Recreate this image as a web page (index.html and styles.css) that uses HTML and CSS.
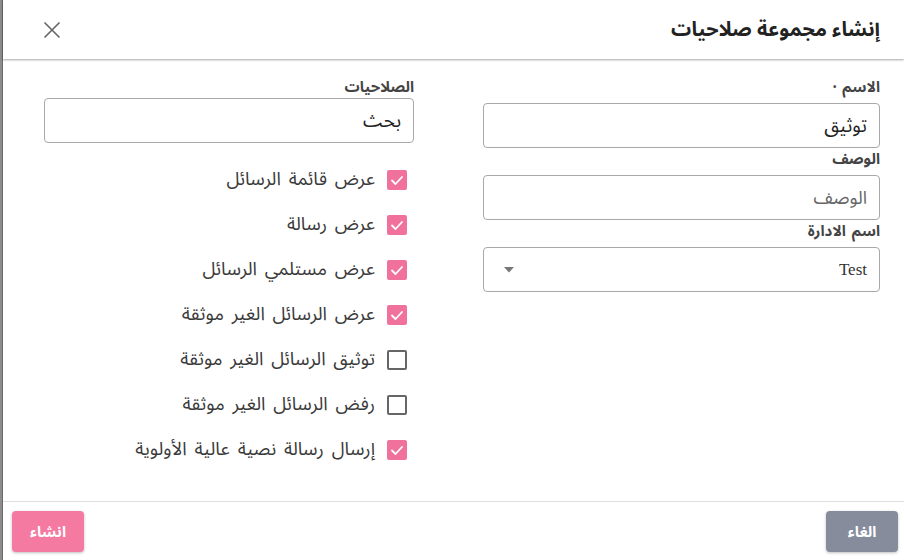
FILE: index.html
```html
<!DOCTYPE html>
<html lang="ar">
<head>
<meta charset="utf-8">
<title>إنشاء مجموعة صلاحيات</title>
<link rel="stylesheet" href="styles.css">
</head>
<body>
<div class="backdrop"></div>
<div class="dialog" dir="rtl">
  <header class="dlg-head">
    <h1 class="dlg-title">إنشاء مجموعة صلاحيات</h1>
    <button class="close" aria-label="close">
      <svg width="18" height="18" viewBox="0 0 18 18"><path d="M1.5 1.5 L16.5 16.5 M16.5 1.5 L1.5 16.5" stroke="#666" stroke-width="1.6" fill="none"/></svg>
    </button>
  </header>
  <main class="dlg-body">
    <section class="col col-main">
      <label class="lbl">الاسم <span class="req">•</span></label>
      <div class="field"><span class="val">توثيق</span></div>
      <label class="lbl">الوصف</label>
      <div class="field"><span class="ph">الوصف</span></div>
      <label class="lbl">اسم الادارة</label>
      <div class="field select">
        <span class="latin" dir="ltr">Test</span>
        <svg class="caret" width="10" height="6" viewBox="0 0 10 6"><path d="M0 0 L10 0 L5 5.5 Z" fill="#777"/></svg>
      </div>
    </section>
    <section class="col col-perms">
      <label class="lbl lbl-tight">الصلاحيات</label>
      <div class="field"><span class="val">بحث</span></div>
      <ul class="checks">
        <li class="chk on"><span class="box"><svg viewBox="0 0 20 20"><path d="M5 10.5 L8.5 14 L15 7" stroke="#fff" stroke-width="1.8" fill="none" stroke-linecap="round" stroke-linejoin="round"/></svg></span>عرض قائمة الرسائل</li>
        <li class="chk on"><span class="box"><svg viewBox="0 0 20 20"><path d="M5 10.5 L8.5 14 L15 7" stroke="#fff" stroke-width="1.8" fill="none" stroke-linecap="round" stroke-linejoin="round"/></svg></span>عرض رسالة</li>
        <li class="chk on"><span class="box"><svg viewBox="0 0 20 20"><path d="M5 10.5 L8.5 14 L15 7" stroke="#fff" stroke-width="1.8" fill="none" stroke-linecap="round" stroke-linejoin="round"/></svg></span>عرض مستلمي الرسائل</li>
        <li class="chk on"><span class="box"><svg viewBox="0 0 20 20"><path d="M5 10.5 L8.5 14 L15 7" stroke="#fff" stroke-width="1.8" fill="none" stroke-linecap="round" stroke-linejoin="round"/></svg></span>عرض الرسائل الغير موثقة</li>
        <li class="chk"><span class="box"></span>توثيق الرسائل الغير موثقة</li>
        <li class="chk"><span class="box"></span>رفض الرسائل الغير موثقة</li>
        <li class="chk on"><span class="box"><svg viewBox="0 0 20 20"><path d="M5 10.5 L8.5 14 L15 7" stroke="#fff" stroke-width="1.8" fill="none" stroke-linecap="round" stroke-linejoin="round"/></svg></span>إرسال رسالة نصية عالية الأولوية</li>
      </ul>
    </section>
  </main>
  <footer class="dlg-foot">
    <button class="btn btn-cancel">الغاء</button>
    <button class="btn btn-create">انشاء</button>
  </footer>
</div>
</body>
</html>
```
FILE: styles.css
```css
* { box-sizing: border-box; }
html, body { margin: 0; padding: 0; }
body {
  width: 904px;
  height: 560px;
  overflow: hidden;
  display: flex;
  background: #8f8f8f;
  font-family: "Noto Sans Arabic", "Noto Sans", "DejaVu Sans", sans-serif;
  color: #333;
}
.backdrop {
  width: 3px;
  flex: none;
  background: #8c8c8c;
  border-right: 1px solid #6a6a6a;
}
.dialog {
  flex: 1;
  background: #fff;
  display: flex;
  flex-direction: column;
  height: 560px;
}
.dlg-head {
  height: 59px;
  flex: none;
  display: flex;
  align-items: center;
  justify-content: space-between;
  padding: 0 24px 0 40px;
  box-shadow: 0 1px 2px rgba(0,0,0,0.35);
  position: relative;
  z-index: 1;
}
.dlg-title {
  margin: 0;
  font-size: 20px;
  font-weight: 700;
  color: #222;
}
.close {
  background: none;
  border: 0;
  padding: 0;
  width: 18px;
  height: 18px;
  display: flex;
}
.dlg-body {
  flex: 1;
  display: grid;
  grid-template-columns: 397px 370px;
  column-gap: 69px;
  align-content: start;
  padding: 17px 24px 0 40px;
}
.col { display: flex; flex-direction: column; }
.lbl {
  height: 22px;
  margin-bottom: 5px;
  font-size: 15px;
  font-weight: 700;
  color: #444;
  line-height: 22px;
  word-spacing: 2px;
}
.lbl-tight { margin-bottom: 0; }
.req { font-size: 9px; vertical-align: middle; }
.field {
  height: 45px;
  border: 1px solid #a8a8a8;
  border-radius: 4px;
  display: flex;
  align-items: center;
  justify-content: space-between;
  padding: 0 12px 0 20px;
  font-size: 19px;
  color: #222;
}
.ph { color: #666; font-size: 18px; }
.field .latin { font-family: "Liberation Serif", "Times New Roman", serif; font-size: 17px; color: #333; }
.checks {
  list-style: none;
  margin: 14px 0 0;
  padding: 0 7px 0 0;
}
.chk {
  height: 45px;
  display: flex;
  align-items: center;
  gap: 12px;
  font-size: 18.5px;
  word-spacing: 3px;
  color: #3a3a3a;
}
.box {
  width: 20px;
  height: 20px;
  flex: none;
  border: 2px solid #666;
  border-radius: 2px;
}
.chk.on .box {
  border: 0;
  background: #f0719c;
}
.box svg { width: 20px; height: 20px; display: block; }
.dlg-foot {
  flex: none;
  height: 59px;
  border-top: 1px solid #ddd;
  display: flex;
  justify-content: space-between;
  align-items: flex-start;
  padding: 9px 6px 0 9px;
}
.btn {
  width: 72px;
  height: 41px;
  border: 0;
  border-radius: 4px;
  color: #fff;
  font-family: inherit;
  font-size: 15px;
  font-weight: 700;
  box-shadow: 0 1px 3px rgba(0,0,0,0.25);
}
.btn-cancel { background: #878c9d; }
.btn-create { background: #f57aa2; }
```
